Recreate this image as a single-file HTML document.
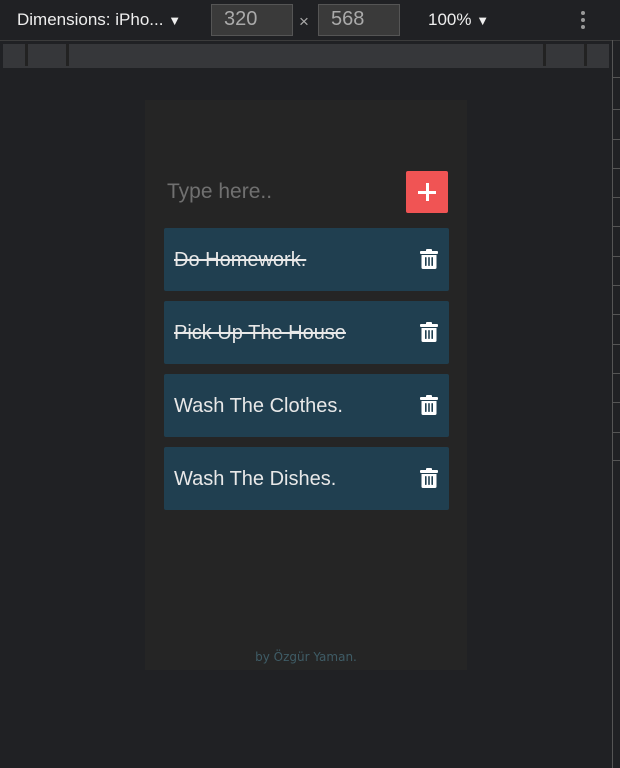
<!DOCTYPE html>
<html><head><style>
body{margin:0;width:620px;height:768px;background:#202124;font-family:"Liberation Sans",sans-serif;position:relative;overflow:hidden}
.a{position:absolute}
.tb{left:0;top:0;width:620px;height:40px;background:#202124;border-bottom:1px solid #3c3c3c}
.box{background:#3a3a3a;border:1px solid #555;color:#aaa;font-size:20px;height:30px;line-height:28px;box-sizing:border-box;padding-left:12px}
.item{left:164px;width:285px;height:63px;background:#203f50;border-radius:2px;color:#e8e8e8;font-size:20px;line-height:63px}
.item span{position:absolute;left:10px;top:1px}
.s{text-decoration:line-through}
.item svg{position:absolute;left:255px;top:20px}
.tick{left:613px;width:7px;height:1px;background:#555}
</style></head><body>
<div class="a tb"></div>
<div class="a" style="left:17px;top:10px;color:#eee;font-size:17px">Dimensions: iPho... <span style="font-size:13px">▼</span></div>
<div class="a box" style="left:211px;top:4px;width:82px;height:32px">320</div>
<div class="a" style="left:299px;top:12px;color:#aaa;font-size:17px">×</div>
<div class="a box" style="left:318px;top:4px;width:82px;height:32px">568</div>
<div class="a" style="left:428px;top:10px;color:#eee;font-size:17px">100% <span style="font-size:13px">▼</span></div>
<div class="a" style="left:581px;top:11px;width:4px">
<div style="width:4px;height:4px;border-radius:2px;background:#999;margin-bottom:3px"></div>
<div style="width:4px;height:4px;border-radius:2px;background:#999;margin-bottom:3px"></div>
<div style="width:4px;height:4px;border-radius:2px;background:#999"></div></div>
<div class="a" style="left:3px;top:44px;width:606px;height:24px;background:#36373a"></div>
<div class="a" style="left:25px;top:44px;width:3px;height:22px;background:#222"></div>
<div class="a" style="left:66px;top:44px;width:3px;height:22px;background:#222"></div>
<div class="a" style="left:543px;top:44px;width:3px;height:22px;background:#222"></div>
<div class="a" style="left:584px;top:44px;width:3px;height:22px;background:#222"></div>
<div class="a" style="left:612px;top:40px;width:1px;height:728px;background:#555"></div>
<div class="a tick" style="top:77px"></div><div class="a tick" style="top:109px"></div><div class="a tick" style="top:139px"></div><div class="a tick" style="top:168px"></div><div class="a tick" style="top:197px"></div><div class="a tick" style="top:226px"></div><div class="a tick" style="top:256px"></div><div class="a tick" style="top:285px"></div><div class="a tick" style="top:314px"></div><div class="a tick" style="top:344px"></div><div class="a tick" style="top:373px"></div><div class="a tick" style="top:402px"></div><div class="a tick" style="top:432px"></div><div class="a tick" style="top:460px"></div>
<div class="a" style="left:145px;top:100px;width:322px;height:570px;background:#252525"></div>
<div class="a" style="left:167px;top:180px;color:#707070;font-size:21px">Type here..</div>
<div class="a" style="left:406px;top:171px;width:42px;height:42px;background:#f05454;border-radius:2px"><div class="a" style="left:19.5px;top:12px;width:3px;height:18px;background:#fff"></div><div class="a" style="left:12px;top:19.5px;width:18px;height:3px;background:#fff"></div></div>
<svg width="0" height="0" style="position:absolute"><defs><g id="t"><rect x="1" y="3" width="18" height="3" rx="1" fill="#fff"/><rect x="7" y="1" width="6" height="3" rx="1" fill="#fff"/><path d="M2.5 7h15v12.5q0 1.5-1.5 1.5H4q-1.5 0-1.5-1.5z" fill="#fff"/><rect x="6" y="9" width="1.6" height="9" rx=".8" fill="#203f50"/><rect x="9.2" y="9" width="1.6" height="9" rx=".8" fill="#203f50"/><rect x="12.4" y="9" width="1.6" height="9" rx=".8" fill="#203f50"/></g></defs></svg>
<div class="a item" style="top:228px"><span class="s">Do Homework.</span><svg width="20" height="22"><use href="#t"/></svg></div>
<div class="a item" style="top:301px"><span class="s">Pick Up The House</span><svg width="20" height="22"><use href="#t"/></svg></div>
<div class="a item" style="top:374px"><span>Wash The Clothes.</span><svg width="20" height="22"><use href="#t"/></svg></div>
<div class="a item" style="top:447px"><span>Wash The Dishes.</span><svg width="20" height="22"><use href="#t"/></svg></div>
<div class="a" style="left:145px;width:322px;top:650px;text-align:center;color:#3f5c66;font-size:12px;font-family:'DejaVu Sans',sans-serif">by Özgür Yaman.</div>
</body></html>
